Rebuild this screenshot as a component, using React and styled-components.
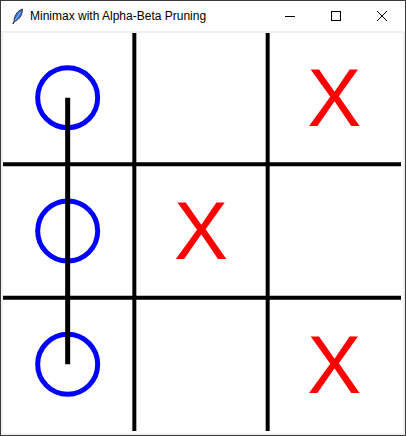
import React from "react";
import styled, { createGlobalStyle } from "styled-components";

const GlobalStyle = createGlobalStyle`
  html, body { margin: 0; padding: 0; background: #ffffff; }
  * { box-sizing: border-box; }
`;

const Window = styled.div`
  width: 406px;
  height: 436px;
  border: 1px solid #3a3a3a;
  background: #f0f0f0;
  display: flex;
  flex-direction: column;
`;

const TitleBar = styled.div`
  height: 30px;
  flex: none;
  display: flex;
  align-items: center;
  background: #ffffff;
`;

const AppIcon = styled.svg`
  width: 16px;
  height: 16px;
  margin-left: 9px;
  flex: none;
`;

const Title = styled.span`
  margin-left: 4px;
  font-family: "Liberation Sans", Arial, sans-serif;
  font-size: 12px;
  color: #000000;
  flex: 1;
  white-space: nowrap;
`;

const CaptionButton = styled.div`
  width: 46px;
  height: 30px;
  display: flex;
  align-items: center;
  justify-content: center;
  flex: none;
`;

const CanvasFrame = styled.div`
  width: 404px;
  height: 404px;
  border: 2px solid #f0f0f0;
  background: #ffffff;
  overflow: hidden;
`;

const BoardSvg = styled.svg`
  display: block;
  width: 400px;
  height: 400px;
`;

const Mark = styled.text`
  font-family: "Liberation Sans", Arial, sans-serif;
  font-size: 81px;
  fill: #ff0000;
`;

const C = 400 / 3;
const board = [
  ["O", "", "X"],
  ["O", "X", ""],
  ["O", "", "X"],
];

function Board() {
  const lines = [1, 2].map((i) => i * C);
  return (
    <BoardSvg viewBox="2 2 400 400">
      {lines.map((p) => (
        <line key={"v" + p} x1={p} y1={0} x2={p} y2={400} stroke="#000" strokeWidth="4" />
      ))}
      {lines.map((p) => (
        <line key={"h" + p} x1={0} y1={p} x2={400} y2={p} stroke="#000" strokeWidth="4" />
      ))}
      {board.map((row, r) =>
        row.map((v, c) => {
          const cx = c * C + C / 2;
          const cy = r * C + C / 2;
          if (v === "O")
            return (
              <circle key={r + "-" + c} cx={cx} cy={cy} r="30" fill="none" stroke="#0000ff" strokeWidth="5" />
            );
          if (v === "X")
            return (
              <Mark key={r + "-" + c} x={cx} y={cy + 28.4} textAnchor="middle">
                X
              </Mark>
            );
          return null;
        })
      )}
      <line x1={C / 2} y1={C / 2} x2={C / 2} y2={2 * C + C / 2} stroke="#000" strokeWidth="5" />
    </BoardSvg>
  );
}

export default function App() {
  return (
    <>
      <GlobalStyle />
      <Window>
        <TitleBar>
          <AppIcon viewBox="0 0 16 16">
            <path d="M4.2 13.6 C3.8 9 6.5 3.2 12.4 1 C12.6 6 10 11.6 4.2 13.6 Z" fill="#3f74d6" stroke="#1b2740" strokeWidth="0.9" />
            <path d="M5 12.5 L10.5 4" stroke="#a9c4f2" strokeWidth="0.8" />
            <path d="M4.4 13.2 L3 15.6" stroke="#1b2740" strokeWidth="1.2" strokeLinecap="round" />
          </AppIcon>
          <Title>Minimax with Alpha-Beta Pruning</Title>
          <CaptionButton>
            <svg width="10" height="10" viewBox="0 0 10 10">
              <line x1="0" y1="5.5" x2="10" y2="5.5" stroke="#000" strokeWidth="1" />
            </svg>
          </CaptionButton>
          <CaptionButton>
            <svg width="10" height="10" viewBox="0 0 10 10">
              <rect x="0.5" y="0.5" width="9" height="9" fill="none" stroke="#000" strokeWidth="1" />
            </svg>
          </CaptionButton>
          <CaptionButton>
            <svg width="10" height="10" viewBox="0 0 10 10">
              <path d="M0 0 L10 10 M10 0 L0 10" stroke="#000" strokeWidth="1" />
            </svg>
          </CaptionButton>
        </TitleBar>
        <CanvasFrame>
          <Board />
        </CanvasFrame>
      </Window>
    </>
  );
}
